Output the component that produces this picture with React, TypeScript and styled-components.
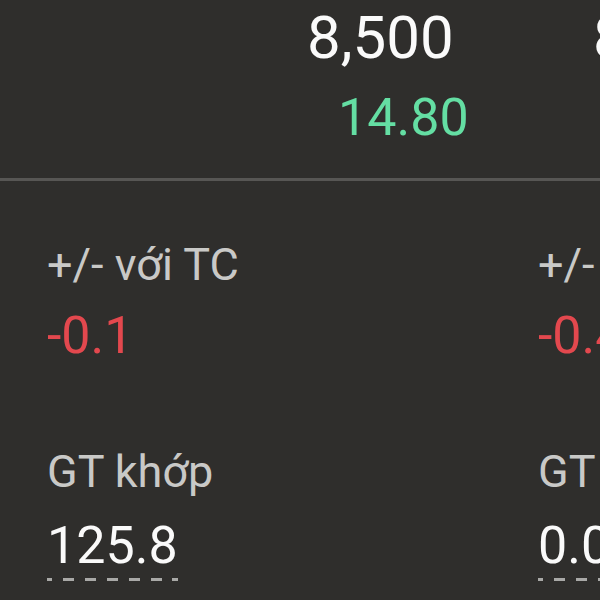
import React from 'react';
import styled, { createGlobalStyle } from 'styled-components';

const GlobalStyle = createGlobalStyle`
	html, body {
		margin: 0;
		padding: 0;
		background: #2f2e2c;
	}
	body {
		font-family: Roboto, 'Noto Sans', sans-serif;
	}
`;

const Screen = styled.div`
	width: 600px;
	height: 600px;
	overflow: hidden;
	background: #2f2e2c;
	display: flex;
	flex-direction: column;
`;

const QuoteRow = styled.div`
	display: flex;
	height: 178px;
	padding-top: 3px;
	box-sizing: border-box;
	flex-shrink: 0;
`;

const QuoteCell = styled.div`
	width: 491px;
	flex-shrink: 0;
	display: flex;
	flex-direction: column;
`;

const Price = styled.div<{ $indent: number }>`
	padding-left: ${p => p.$indent}px;
	font-size: 60px;
	line-height: 70px;
	color: #fafafa;
	white-space: nowrap;
`;

const Change = styled.div<{ $indent: number }>`
	padding-left: ${p => p.$indent}px;
	margin-top: 10px;
	font-size: 52px;
	line-height: 70px;
	color: #64dea3;
	white-space: nowrap;
`;

const Divider = styled.div`
	height: 3px;
	background: #575654;
	flex-shrink: 0;
`;

const StatsRow = styled.div`
	display: flex;
	padding-top: 54px;
`;

const StatsColumn = styled.div`
	width: 491px;
	flex-shrink: 0;
	padding-left: 47px;
	box-sizing: border-box;
	display: flex;
	flex-direction: column;
	gap: 74px;
`;

const Field = styled.div`
	display: flex;
	flex-direction: column;
	gap: 9px;
`;

const Label = styled.div`
	font-size: 45px;
	line-height: 60px;
	color: #c9c9c7;
	white-space: nowrap;
`;

const Value = styled.div<{ $tone: 'down' | 'plain'; $dashed?: boolean }>`
	position: relative;
	align-self: flex-start;
	margin-top: ${p => (p.$dashed ? '3px' : '0')};
	font-size: 52px;
	line-height: 64px;
	color: ${p => (p.$tone === 'down' ? '#e3484e' : '#fafafa')};
	white-space: nowrap;
	padding-bottom: ${p => (p.$dashed ? '3px' : '0')};

	&::after {
		content: '';
		display: ${p => (p.$dashed ? 'block' : 'none')};
		position: absolute;
		left: 0;
		bottom: 0;
		width: 131px;
		height: 3px;
		background: repeating-linear-gradient(
			to right,
			#a9a9a7 0 11px,
			transparent 11px 22px
		);
		background-position: -6px 0;
	}
`;

const quotes = [
	{ price: '8,500', change: '14.80', priceIndent: 307, changeIndent: 338 },
	{ price: '8,600', change: '15.20', priceIndent: 102, changeIndent: 133 },
];

const stats = [
	{ diff: '-0.1', matched: '125.8' },
	{ diff: '-0.45', matched: '0.00' },
];

const App = () => {
	return (
		<>
			<GlobalStyle />
			<Screen>
				<QuoteRow>
					{quotes.map((q, i) => (
						<QuoteCell key={i}>
							<Price $indent={q.priceIndent}>{q.price}</Price>
							<Change $indent={q.changeIndent}>{q.change}</Change>
						</QuoteCell>
					))}
				</QuoteRow>
				<Divider />
				<StatsRow>
					{stats.map((s, i) => (
						<StatsColumn key={i}>
							<Field>
								<Label>+/- với TC</Label>
								<Value $tone="down">{s.diff}</Value>
							</Field>
							<Field>
								<Label>GT khớp</Label>
								<Value $tone="plain" $dashed>{s.matched}</Value>
							</Field>
						</StatsColumn>
					))}
				</StatsRow>
			</Screen>
		</>
	);
};

export default App;
